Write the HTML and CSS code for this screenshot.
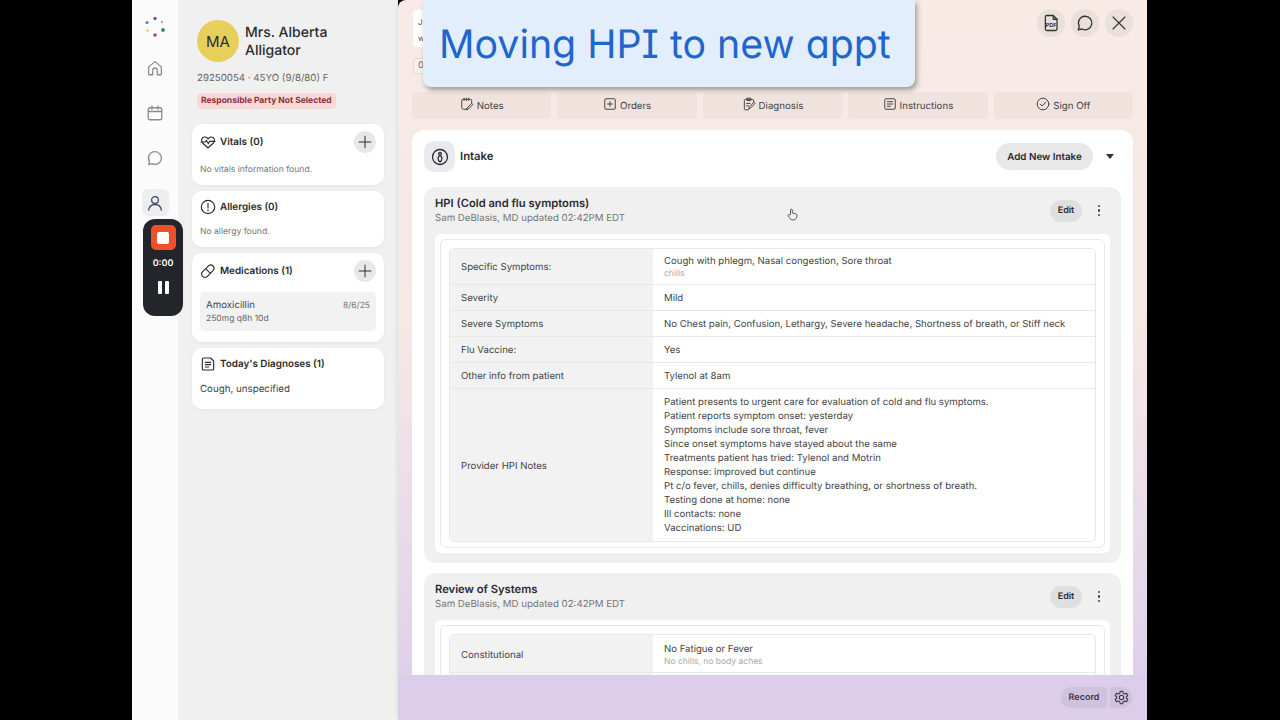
FILE: index.html
```html
<!DOCTYPE html>
<html lang="en">
<head>
  <meta charset="UTF-8" />
  <title>Patient chart</title>
  <link rel="stylesheet" href="styles.css">
</head>
<body>
  <div class="app">
    <nav class="rail">
      <svg class="logo" width="22" height="22" viewBox="0 0 22 22">
        <circle cx="11" cy="2.5" r="1.7" fill="#6d5a8c"/>
        <circle cx="18" cy="6" r="1.2" fill="#8fb8c8"/>
        <circle cx="19" cy="14" r="1.9" fill="#2f8a78"/>
        <circle cx="11" cy="19" r="1.8" fill="#a5553f"/>
        <circle cx="3.5" cy="14.5" r="1.2" fill="#e6c65a"/>
        <circle cx="3" cy="6.5" r="1.6" fill="#4f8f96"/>
      </svg>
      <a class="rail-item">
        <svg width="18" height="18" viewBox="0 0 24 24"><path d="M3.5 10.5 12 3.5l8.500 7V20a1 1 0 0 1-1 1H15v-6a3 3 0 0 0-6 0v6H4.500a1 1 0 0 1-1-1z"/></svg>
      </a>
      <a class="rail-item">
        <svg width="18" height="18" viewBox="0 0 24 24"><rect x="3" y="5" width="18" height="16" rx="2.500"/><path d="M3 10h18M8 2.500V7M16 2.500V7"/></svg>
      </a>
      <a class="rail-item">
        <svg width="18" height="18" viewBox="0 0 24 24"><path d="M12 3.500a8.500 8.500 0 1 1-4 16L3.500 21l1.300-4.300A8.500 8.500 0 0 1 12 3.500z"/></svg>
      </a>
      <a class="rail-item active">
        <svg width="18" height="18" viewBox="0 0 24 24"><circle cx="12" cy="8" r="4.500"/><path d="M3.500 21.500c.8-5 4-7.500 8.500-7.500s7.700 2.500 8.500 7.500"/></svg>
      </a>
    </nav>

    <div class="recorder">
      <div class="rec-stop"><span></span></div>
      <div class="rec-time">0:00</div>
      <div class="rec-pause"><span></span><span></span></div>
    </div>

    <aside class="patient">
      <div class="patient-head">
        <div class="avatar">MA</div>
        <div class="patient-name">Mrs. Alberta Alligator</div>
      </div>
      <div class="patient-meta">29250054 · 45YO (9/8/80) F</div>
      <span class="badge">Responsible Party Not Selected</span>

      <section class="side-card vitals">
        <div class="side-head">
          <svg width="16" height="16" viewBox="0 0 24 24"><path d="M12 21 4 13.500C1 10.500 2 5 6.500 4.500 9 4.200 11 5.500 12 7.500c1-2 3-3.300 5.500-3 4.500.5 5.500 6 2.500 9z"/><path d="M1.500 12H8l1.500-2.500 3 5 2-3.500h8"/></svg>
          <h3>Vitals (0)</h3>
          <button class="round-add"><svg width="14" height="14" viewBox="0 0 24 24"><path d="M12 2v20M2 12h20"/></svg></button>
        </div>
        <p class="empty">No vitals information found.</p>
      </section>

      <section class="side-card allergies">
        <div class="side-head">
          <svg width="16" height="16" viewBox="0 0 24 24"><circle cx="12" cy="12" r="10"/><path d="M12 6.500v7M12 16.500v1.500"/></svg>
          <h3>Allergies (0)</h3>
        </div>
        <p class="empty">No allergy found.</p>
      </section>

      <section class="side-card meds">
        <div class="side-head">
          <svg width="16" height="16" viewBox="0 0 24 24"><path d="M4 20a5 5 0 0 1 0-7l9-9a5 5 0 0 1 7 7l-9 9a5 5 0 0 1-7 0zM8.500 8.500l7 7"/></svg>
          <h3>Medications (1)</h3>
          <button class="round-add"><svg width="14" height="14" viewBox="0 0 24 24"><path d="M12 2v20M2 12h20"/></svg></button>
        </div>
        <div class="med-row">
          <div class="med-top"><span>Amoxicillin</span><span class="med-date">8/6/25</span></div>
          <div class="med-dose">250mg q8h 10d</div>
        </div>
      </section>

      <section class="side-card diagnoses">
        <div class="side-head">
          <svg width="16" height="16" viewBox="0 0 24 24"><path d="M3.500 5a2 2 0 0 1 2-2H16l4.500 4.500V19a2 2 0 0 1-2 2h-13a2 2 0 0 1-2-2z"/><path d="M8 9.500h8M8 13h8M8 16.500h5"/></svg>
          <h3>Today's Diagnoses (1)</h3>
        </div>
        <p class="diagnosis">Cough, unspecified</p>
      </section>
    </aside>

    <main class="chart">
      <header class="chart-top">
        <div class="visit-info">
          <div class="visit-card">J<br>w</div>
          <div class="visit-chip">0</div>
        </div>
        <div class="top-actions">
          <button class="top-btn"><svg width="18" height="18" viewBox="0 0 24 24"><path d="M4.500 4a2 2 0 0 1 2-2H15l5 5v13a2 2 0 0 1-2 2H6.500a2 2 0 0 1-2-2z" /><path d="M15 2v5h5"/><text x="12.200" y="17.500" text-anchor="middle" class="pdf-label">PDF</text></svg></button>
          <button class="top-btn"><svg width="18" height="18" viewBox="0 0 24 24"><path d="M12 3a9 9 0 1 1-4 17l-5 1 1.400-4.600A9 9 0 0 1 12 3z"/></svg></button>
          <button class="top-btn"><svg width="16" height="16" viewBox="0 0 24 24"><path d="M3 3l18 18M21 3 3 21"/></svg></button>
        </div>
      </header>

      <div class="tabs">
        <button class="tab"><svg width="14" height="14" viewBox="0 0 24 24"><path d="M13 21H6a3 3 0 0 1-3-3V6a2 2 0 0 1 2-2h13a2 2 0 0 1 2 2v5M7 2v4M11 2v4M15 2v4"/><path d="M21.500 13.500 14 21l-3 1 1-3 7.500-7.500z"/></svg>Notes</button>
        <button class="tab"><svg width="14" height="14" viewBox="0 0 24 24"><path d="M3 5a2 2 0 0 1 2-2h14a2 2 0 0 1 2 2v14a2 2 0 0 1-2 2H5a2 2 0 0 1-2-2z"/><path d="M12 8v8M8 12h8"/></svg>Orders</button>
        <button class="tab"><svg width="14" height="14" viewBox="0 0 24 24"><path d="M11 22H6a2 2 0 0 1-2-2V6a2 2 0 0 1 2-2h12a2 2 0 0 1 2 2v3M9 2h6v4H9zM8 11h6M8 15h3"/><path d="M22 11.500 14.500 19l-3 1.500 1-3.500L20 9.500z"/></svg>Diagnosis</button>
        <button class="tab"><svg width="14" height="14" viewBox="0 0 24 24"><path d="M3 5a2 2 0 0 1 2-2h14a2 2 0 0 1 2 2v14a2 2 0 0 1-2 2H5a2 2 0 0 1-2-2z"/><path d="M7.500 8h9M7.500 12h9M7.500 16h5"/></svg>Instructions</button>
        <button class="tab"><svg width="14" height="14" viewBox="0 0 24 24"><circle cx="12" cy="12" r="10"/><path d="m7.500 12.500 3 3 6-6.500"/></svg>Sign Off</button>
      </div>

      <div class="chart-card">
        <div class="intake-head">
          <span class="intake-icon"><svg width="18" height="18" viewBox="0 0 24 24"><circle cx="12" cy="12" r="10"/><circle cx="12" cy="7.500" r="1.800"/><path d="M12 10.500c2 0 2.500 1.500 2.500 3s-1 4-2.500 5c-1.500-1-2.500-3.500-2.500-5s.5-3 2.500-3z"/></svg></span>
          <h2>Intake</h2>
          <button class="add-intake">Add New Intake</button>
          <span class="caret"></span>
        </div>

        <section class="block">
          <div class="block-head">
            <div>
              <h4>HPI (Cold and flu symptoms)</h4>
              <p>Sam DeBlasis, MD updated 02:42PM EDT</p>
            </div>
            <button class="edit">Edit</button>
            <span class="dots"><i></i><i></i><i></i></span>
          </div>
          <div class="block-body">
            <div class="block-frame">
              <table class="qa">
                <tr class="tall"><th>Specific Symptoms:</th><td>Cough with phlegm, Nasal congestion, Sore throat<small>chills</small></td></tr>
                <tr><th>Severity</th><td>Mild</td></tr>
                <tr><th>Severe Symptoms</th><td>No Chest pain, Confusion, Lethargy, Severe headache, Shortness of breath, or Stiff neck</td></tr>
                <tr><th>Flu Vaccine:</th><td>Yes</td></tr>
                <tr><th>Other info from patient</th><td>Tylenol at 8am</td></tr>
                <tr class="notes">
                  <th>Provider HPI Notes</th>
                  <td>Patient presents to urgent care for evaluation of cold and flu symptoms.<br>
                    Patient reports symptom onset: yesterday<br>
                    Symptoms include sore throat, fever<br>
                    Since onset symptoms have stayed about the same<br>
                    Treatments patient has tried: Tylenol and Motrin<br>
                    Response: improved but continue<br>
                    Pt c/o fever, chills, denies difficulty breathing, or shortness of breath.<br>
                    Testing done at home: none<br>
                    Ill contacts: none<br>
                    Vaccinations: UD</td>
                </tr>
              </table>
            </div>
          </div>
        </section>

        <section class="block">
          <div class="block-head">
            <div>
              <h4>Review of Systems</h4>
              <p>Sam DeBlasis, MD updated 02:42PM EDT</p>
            </div>
            <button class="edit">Edit</button>
            <span class="dots"><i></i><i></i><i></i></span>
          </div>
          <div class="block-body">
            <div class="block-frame">
              <table class="qa">
                <tr class="tall ros-first"><th>Constitutional</th><td>No Fatigue or Fever<small>No chills, no body aches</small></td></tr>
                <tr class="tall"><th></th><td></td></tr>
              </table>
            </div>
          </div>
        </section>
      </div>

      <footer class="chart-foot">
        <button class="record">Record</button>
        <button class="settings"><svg width="15" height="15" viewBox="0 0 24 24"><circle cx="12" cy="12" r="3.500"/><path d="M10 2h4l.7 3 2.300 1.300 3-1 2 3.500-2.200 2.100v2.200l2.200 2.100-2 3.500-3-1-2.300 1.300-.7 3h-4l-.7-3L7 17.700l-3 1-2-3.500 2.200-2.100v-2.200L2 8.800l2-3.500 3 1 2.300-1.300z"/></svg></button>
      </footer>
    </main>

    <div class="caption">Moving HPI to new appt</div>

    <svg class="cursor" width="11" height="13" viewBox="0 0 22 26"><path d="M7 13V4a1.800 1.800 0 0 1 3.600 0v6l7 1.500c1.500.3 2.400 1.400 2.400 3 0 4-2 9.500-7.500 9.500-4 0-6-1.500-7.500-4.500L2 15c-.8-1.500 1.500-3 3-1.500z"/></svg>
  </div>
</body>
</html>
```

FILE: styles.css
```css
* {
  box-sizing: border-box;
  margin: 0;
  padding: 0;
  font-family: 'Inter', 'Liberation Sans', sans-serif;
  text-rendering: geometricPrecision;
}

body {
  background-color: #000;
  color: #2b2b2e;
  height: 720px;
  overflow: hidden;
}

button {
  border: none;
  color: inherit;
}

svg {
  fill: none;
  stroke: currentColor;
  stroke-width: 1.7;
  stroke-linecap: round;
  stroke-linejoin: round;
  flex-shrink: 0;
}

.app {
  position: relative;
  display: flex;
  width: 1015px;
  height: 720px;
  margin-left: 132px;
  overflow: hidden;
}

/* left icon rail */
.rail {
  width: 46px;
  background-color: #fbfbfb;
  display: flex;
  flex-direction: column;
  align-items: center;
  padding-top: 16px;
}

.logo {
  stroke: none;
  margin-bottom: 16px;
}

.rail-item {
  width: 27px;
  height: 27px;
  margin-bottom: 18px;
  border-radius: 6px;
  display: flex;
  align-items: center;
  justify-content: center;
  color: #8a8a90;
}

.rail-item.active {
  background-color: #eeeef0;
  color: #3f4a5e;
}

.recorder {
  position: absolute;
  left: 11px;
  top: 219px;
  width: 40px;
  height: 97px;
  background-color: #24252a;
  border-radius: 12px;
  display: flex;
  flex-direction: column;
  align-items: center;
  padding-top: 6px;
}

.rec-stop {
  width: 25px;
  height: 25px;
  background-color: #ef4f2b;
  border-radius: 5px;
  display: flex;
  align-items: center;
  justify-content: center;
}

.rec-stop span {
  width: 12px;
  height: 12px;
  background-color: #fff;
  border-radius: 2px;
}

.rec-time {
  color: #fff;
  font-size: 9px;
  font-weight: 600;
  margin-top: 8px;
}

.rec-pause {
  display: flex;
  gap: 3px;
  margin-top: 12px;
}

.rec-pause span {
  width: 4px;
  height: 13px;
  background-color: #fff;
  border-radius: 1px;
}

/* patient column */
.patient {
  width: 220px;
  background-color: #f0f0f0;
  padding: 20px 14px 0;
  display: flex;
  flex-direction: column;
  align-items: flex-start;
}

.patient-head {
  display: flex;
  align-items: center;
  gap: 6px;
  padding-left: 5px;
}

.avatar {
  width: 42px;
  height: 42px;
  border-radius: 50%;
  background-color: #e8cf5c;
  font-size: 15px;
  display: flex;
  align-items: center;
  justify-content: center;
}

.patient-name {
  width: 110px;
  font-size: 14px;
  font-weight: 500;
  line-height: 18px;
  margin-top: 2px;
}

.patient-meta {
  font-size: 9.700px;
  color: #666;
  margin: 9px 0 9px 5px;
  padding-top: 2px;
}

.badge {
  background-color: #f8d9d8;
  color: #8e2f3c;
  font-size: 8.500px;
  line-height: 10px;
  font-weight: 700;
  border-radius: 4px;
  padding: 3px 4px;
  margin: 0 0 15px 5px;
}

.side-card {
  width: 192px;
  background-color: #fff;
  border-radius: 10px;
  box-shadow: 0 1px 4px rgba(0, 0, 0, 0.05);
  padding: 7px 8px;
  margin-bottom: 6px;
}

.side-head {
  display: flex;
  align-items: center;
  gap: 4px;
  height: 22px;
  color: #2b2b2e;
}

.side-head h3 {
  font-size: 9.900px;
  font-weight: 600;
  flex: 1;
}

.round-add {
  width: 22px;
  height: 22px;
  border-radius: 50%;
  background-color: #e8e8e8;
  display: flex;
  align-items: center;
  justify-content: center;
}

.empty {
  font-size: 8.600px;
  color: #777;
  margin-top: 11px;
}

.vitals {
  height: 61px;
}

.vitals .empty {
  margin-top: 12px;
}

.allergies {
  height: 56px;
}

.allergies .side-head {
  height: 18px;
}

.meds {
  height: 89px;
}

.med-row {
  background-color: #f2f2f2;
  border-radius: 5px;
  margin-top: 10px;
  padding: 8px 6px;
  height: 39px;
}

.med-top {
  display: flex;
  justify-content: space-between;
  align-items: center;
  font-size: 9.700px;
  color: #444;
}

.med-date {
  font-size: 8.500px;
  color: #777;
}

.med-dose {
  font-size: 8.500px;
  color: #666;
  margin-top: 3px;
}

.diagnoses {
  height: 61px;
  padding-top: 8px;
}

.diagnoses .side-head {
  height: 16px;
}

.diagnosis {
  font-size: 9.750px;
  color: #444;
  margin-top: 12px;
}

/* main chart area */
.chart {
  flex: 1;
  min-width: 0;
  display: flex;
  flex-direction: column;
  border-radius: 8px 0 0 8px;
  box-shadow: -1px 0 4px rgba(0, 0, 0, 0.08);
  background: linear-gradient(#f8ebe6 0%, #f6e8e4 45%, #e9daea 75%, #dccdea 100%);
  padding: 0 14px;
}

.chart-top {
  height: 92px;
  display: flex;
  justify-content: space-between;
  padding-top: 9px;
}

.visit-info {
  width: 200px;
  padding: 1px 0 0 1px;
}

.visit-card {
  height: 37px;
  background-color: #fff;
  border-radius: 4px;
  font-size: 8px;
  line-height: 16px;
  padding: 4px 5px;
  color: #555;
}

.visit-chip {
  width: 60px;
  height: 16px;
  margin-top: 11px;
  border: 1px solid #e3d7d2;
  border-radius: 4px;
  background-color: #f8f1ee;
  font-size: 9px;
  padding: 1px 4px;
  color: #666;
}

.top-actions {
  display: flex;
  gap: 6px;
}

.top-btn {
  width: 28px;
  height: 28px;
  border-radius: 50%;
  background-color: #e9dfdb;
  display: flex;
  align-items: center;
  justify-content: center;
  color: #333;
}

.pdf-label {
  fill: currentColor;
  stroke: none;
  font-size: 7.500px;
  font-weight: 700;
}

.tabs {
  display: flex;
  gap: 6px;
  height: 27px;
  margin-bottom: 11px;
}

.tab {
  flex: 1;
  background-color: #f0e2dd;
  border-radius: 4px;
  font-size: 9.700px;
  color: #444;
  display: flex;
  align-items: center;
  justify-content: center;
  gap: 3px;
  padding-top: 1px;
}

.tab svg {
  margin-bottom: 4px;
}

.chart-card {
  flex: 1;
  min-height: 0;
  overflow: hidden;
  background-color: #fff;
  border-radius: 12px 12px 0 0;
  padding: 11px 12px 0;
}

.intake-head {
  display: flex;
  align-items: center;
  height: 31px;
  margin-bottom: 15px;
}

.intake-icon {
  width: 31px;
  height: 31px;
  background-color: #eaeaee;
  border-radius: 10px;
  display: flex;
  align-items: center;
  justify-content: center;
  margin-right: 5px;
}

.intake-head h2 {
  font-size: 11.300px;
  font-weight: 600;
  flex: 1;
  margin-bottom: 2px;
}

.add-intake {
  width: 97px;
  height: 27px;
  border-radius: 14px;
  background-color: #e8e8e8;
  font-size: 9.800px;
  font-weight: 600;
  padding-top: 1px;
}

.caret {
  width: 0;
  height: 0;
  border-left: 4px solid transparent;
  border-right: 4px solid transparent;
  border-top: 5px solid #333;
  margin: 0 7px 0 13px;
}

.block {
  background-color: #f0f0f0;
  border-radius: 12px;
  padding: 0 11px 10px;
  margin-bottom: 10px;
}

.block-head {
  height: 47px;
  display: flex;
  align-items: center;
}

.block-head div:first-child {
  flex: 1;
}

.block-head h4 {
  font-size: 11.200px;
  font-weight: 600;
  line-height: 16px;
}

.block-head p {
  font-size: 9.700px;
  color: #777;
  line-height: 15px;
}

.edit {
  width: 32px;
  height: 22px;
  border-radius: 11px;
  background-color: #dfdfdf;
  font-size: 9px;
  font-weight: 600;
}

.dots {
  width: 34px;
  margin-right: -6px;
  display: flex;
  flex-direction: column;
  align-items: center;
  gap: 2px;
}

.dots i {
  width: 2.500px;
  height: 2.500px;
  border-radius: 50%;
  background-color: #444;
}

.block-body {
  background-color: #fff;
  border-radius: 6px;
  padding: 5px;
}

.block-frame {
  border: 1px solid #e8e8e8;
  border-radius: 6px;
  padding: 8px;
  padding-bottom: 5px;
}

.qa {
  width: 100%;
  border-collapse: separate;
  border-spacing: 0;
  border: 1px solid #e8e8e8;
  border-radius: 5px;
  font-size: 9.600px;
  color: #444;
}

.qa th {
  width: 203px;
  background-color: #f2f2f2;
  font-weight: 400;
  text-align: left;
  padding: 2px 11px 0;
}

.qa td {
  padding: 2px 11px 0;
  height: 26px;
}

.qa th,
.qa td {
  border-bottom: 1px solid #e8e8e8;
}

.qa tr:last-child th,
.qa tr:last-child td {
  border-bottom: none;
}

.qa tr.tall td {
  height: 36px;
}

.qa tr.ros-first th,
.qa tr.ros-first td {
  height: 38px;
  padding-top: 3px;
}

.qa small {
  display: block;
  font-size: 8.500px;
  color: #aaa;
  margin-top: 2px;
}

.qa tr.notes td {
  line-height: 14px;
  padding: 7px 11px 5px;
}

.chart-foot {
  flex-shrink: 0;
  height: 45px;
  margin: 0 -14px;
  padding: 12px 15px 0 0;
  background-color: #dccdea;
  display: flex;
  justify-content: flex-end;
  align-items: flex-start;
  gap: 3px;
}

.record {
  width: 46px;
  height: 21px;
  background-color: #cfc2dc;
  border-radius: 10px 2px 2px 10px;
  font-size: 9px;
  font-weight: 600;
  color: #3a3344;
}

.settings {
  width: 22px;
  height: 21px;
  background-color: #cfc2dc;
  border-radius: 2px 10px 10px 2px;
  display: flex;
  align-items: center;
  justify-content: center;
  color: #3a3344;
}

/* video caption and pointer, both over the page */
.caption {
  position: absolute;
  left: 291px;
  top: 0;
  width: 492px;
  height: 87px;
  background-color: #e3eefc;
  border-radius: 0 0 8px 8px;
  box-shadow: 2px 3px 5px rgba(0, 0, 0, 0.35);
  color: #1f66cc;
  font-size: 39.300px;
  font-feature-settings: 'ss02', 'cv08', 'cv11';
  line-height: 89px;
  padding-left: 16px;
  white-space: nowrap;
}

.cursor {
  position: absolute;
  left: 655px;
  top: 208px;
  background: none;
  color: #444;
}
```
